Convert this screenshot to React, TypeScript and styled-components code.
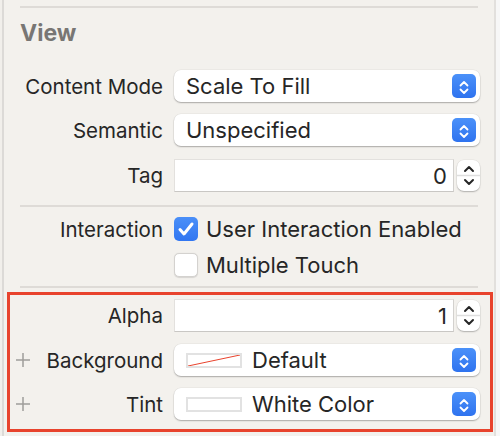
import React from "react";
import styled, { createGlobalStyle } from "styled-components";

const Global = createGlobalStyle`
  html, body { margin: 0; padding: 0; }
  body {
    background: #f7f7f7;
    font-family: Inter, "Noto Sans", sans-serif;
    -webkit-font-smoothing: antialiased;
  }
`;

const Page = styled.div`
  width: 500px;
  height: 436px;
  display: flex;
  background: #f7f7f7;
  overflow: hidden;
`;

const LeftGap = styled.div`
  width: 2px;
  background: #f1efeb;
`;

const Panel = styled.div`
  width: 490px;
  height: 436px;
  box-sizing: content-box;
  border-left: 2px solid #dcdad7;
  border-right: 2px solid #e2e0dd;
  background: #f3f1ed;
  display: flex;
  flex-direction: column;
  padding-top: 6px;
`;

const Divider = styled.div<{ $top?: number }>`
  height: 2px;
  background: #dedbd7;
  margin: ${(p) => p.$top ?? 0}px 16px 0 16px;
`;

const Header = styled.div`
  font-size: 23px;
  line-height: 28px;
  font-weight: 700;
  color: #787674;
  padding: 11px 0 23px 16px;
`;

const Stack = styled.div<{ $top?: number }>`
  display: flex;
  flex-direction: column;
  margin-top: ${(p) => p.$top ?? 0}px;
`;

const Row = styled.div<{ $h: number; $label: number; $right: number; $top?: number }>`
  display: grid;
  grid-template-columns: ${(p) => p.$label}px 1fr;
  column-gap: 11px;
  align-items: center;
  height: ${(p) => p.$h}px;
  padding-right: ${(p) => p.$right}px;
  margin-top: ${(p) => p.$top ?? 0}px;
`;

const Label = styled.div`
  display: flex;
  align-items: center;
  justify-content: flex-end;
  font-size: 20.5px;
  color: #262626;
  white-space: nowrap;
`;

const PlusSlot = styled.span`
  margin-right: auto;
  margin-left: 6px;
  display: flex;
`;

const Popup = styled.div`
  height: 32px;
  box-sizing: border-box;
  background: #ffffff;
  border-radius: 7px;
  box-shadow: 0 1px 1.5px rgba(0, 0, 0, 0.28), 0 0 0 0.5px rgba(0, 0, 0, 0.06);
  display: flex;
  align-items: center;
  padding: 0 4px 0 12px;
  font-size: 22px;
  color: #262626;
`;

const PopupText = styled.span`
  flex: 1;
  white-space: nowrap;
`;

const BlueButton = styled.span`
  width: 24px;
  height: 24px;
  border-radius: 5px;
  background: linear-gradient(#4b91f9, #2f73ef);
  display: flex;
  align-items: center;
  justify-content: center;
`;

const Swatch = styled.span`
  width: 56px;
  height: 15px;
  box-sizing: border-box;
  border: 2px solid #e2e2e2;
  background: #ffffff;
  margin-right: 10px;
  display: flex;
`;

const FieldGroup = styled.div`
  display: flex;
  align-items: center;
  gap: 3px;
`;

const Field = styled.div`
  flex: 1;
  height: 33px;
  box-sizing: border-box;
  background: #ffffff;
  border: 1px solid #e3e1de;
  border-bottom-color: #c9c7c4;
  border-right-color: #d3d1ce;
  display: flex;
  align-items: center;
  justify-content: flex-end;
  padding-right: 6px;
  font-size: 22px;
  color: #262626;
`;

const Stepper = styled.div`
  width: 23px;
  height: 31px;
  border-radius: 7px;
  background: #ffffff;
  box-shadow: 0 1px 1.5px rgba(0, 0, 0, 0.25), 0 0 0 0.5px rgba(0, 0, 0, 0.06);
  display: flex;
`;

const CheckLine = styled.div`
  display: flex;
  align-items: center;
  gap: 8px;
  font-size: 22px;
  color: #262626;
  white-space: nowrap;
`;

const Box = styled.span<{ $checked?: boolean }>`
  width: 24px;
  height: 24px;
  box-sizing: border-box;
  border-radius: 5px;
  display: flex;
  align-items: center;
  justify-content: center;
  background: ${(p) => (p.$checked ? "linear-gradient(#4a8ff8, #3176f1)" : "#ffffff")};
  border: ${(p) => (p.$checked ? "none" : "1px solid #d4d2cf")};
  box-shadow: ${(p) => (p.$checked ? "none" : "0 0.5px 1px rgba(0,0,0,0.12)")};
`;

const RedBox = styled.div`
  margin: 4px 1px 0 3px;
  border: 3px solid #e8432d;
  padding: 4px 0 9px 0;
  display: flex;
  flex-direction: column;
`;

const UpDownBlue = () => (
  <svg width="24" height="24" viewBox="0 0 24 24" fill="none">
    <path d="M8.5 11.5 L12 8 L15.5 11.5" stroke="#fff" strokeWidth="1.8" strokeLinecap="round" strokeLinejoin="round" />
    <path d="M8.5 15.5 L12 19 L15.5 15.5" stroke="#fff" strokeWidth="1.8" strokeLinecap="round" strokeLinejoin="round" />
  </svg>
);

const StepperIcon = () => (
  <svg width="23" height="31" viewBox="0 0 23 31" fill="none">
    <line x1="0" y1="15.5" x2="23" y2="15.5" stroke="#dedede" strokeWidth="1.5" />
    <path d="M8 11 L12 7 L16 11" stroke="#262626" strokeWidth="2" strokeLinecap="round" strokeLinejoin="round" />
    <path d="M8 20 L12 24 L16 20" stroke="#262626" strokeWidth="2" strokeLinecap="round" strokeLinejoin="round" />
  </svg>
);

const Plus = () => (
  <svg width="14" height="14" viewBox="0 0 14 14">
    <path d="M7 0 V14 M0 7 H14" stroke="#9f9d9b" strokeWidth="1.5" />
  </svg>
);

const Check = () => (
  <svg width="24" height="24" viewBox="0 0 24 24" fill="none">
    <path d="M6 12.5 L10 17 L18 7" stroke="#fff" strokeWidth="3" strokeLinecap="round" strokeLinejoin="round" />
  </svg>
);

const PopupControl = ({ text, swatch }: { text: string; swatch?: "none" | "white" }) => (
  <Popup>
    {swatch && (
      <Swatch>
        {swatch === "none" && (
          <svg width="52" height="11" viewBox="0 0 52 11">
            <line x1="0" y1="11" x2="52" y2="0" stroke="#e8432d" strokeWidth="1" />
          </svg>
        )}
      </Swatch>
    )}
    <PopupText>{text}</PopupText>
    <BlueButton>
      <UpDownBlue />
    </BlueButton>
  </Popup>
);

const NumberControl = ({ value }: { value: string }) => (
  <FieldGroup>
    <Field>{value}</Field>
    <Stepper>
      <StepperIcon />
    </Stepper>
  </FieldGroup>
);

export default function App() {
  return (
    <>
      <Global />
      <Page>
        <LeftGap />
        <Panel>
          <Divider />
          <Header>View</Header>
          <Stack>
            <Row $h={32} $label={159} $right={14}>
              <Label>Content Mode</Label>
              <PopupControl text="Scale To Fill" />
            </Row>
            <Row $h={32} $label={159} $right={14} $top={12}>
              <Label>Semantic</Label>
              <PopupControl text="Unspecified" />
            </Row>
            <Row $h={33} $label={159} $right={14} $top={13}>
              <Label>Tag</Label>
              <NumberControl value="0" />
            </Row>
          </Stack>
          <Divider $top={13} />
          <Stack $top={9}>
            <Row $h={24} $label={159} $right={14}>
              <Label>Interaction</Label>
              <CheckLine>
                <Box $checked>
                  <Check />
                </Box>
                User Interaction Enabled
              </CheckLine>
            </Row>
            <Row $h={24} $label={159} $right={14} $top={12}>
              <Label />
              <CheckLine>
                <Box />
                Multiple Touch
              </CheckLine>
            </Row>
          </Stack>
          <Divider $top={10} />
          <RedBox>
            <Row $h={33} $label={153} $right={10}>
              <Label>Alpha</Label>
              <NumberControl value="1" />
            </Row>
            <Row $h={32} $label={153} $right={10} $top={12}>
              <Label>
                <PlusSlot>
                  <Plus />
                </PlusSlot>
                Background
              </Label>
              <PopupControl text="Default" swatch="none" />
            </Row>
            <Row $h={32} $label={153} $right={10} $top={12}>
              <Label>
                <PlusSlot>
                  <Plus />
                </PlusSlot>
                Tint
              </Label>
              <PopupControl text="White Color" swatch="white" />
            </Row>
          </RedBox>
        </Panel>
      </Page>
    </>
  );
}
